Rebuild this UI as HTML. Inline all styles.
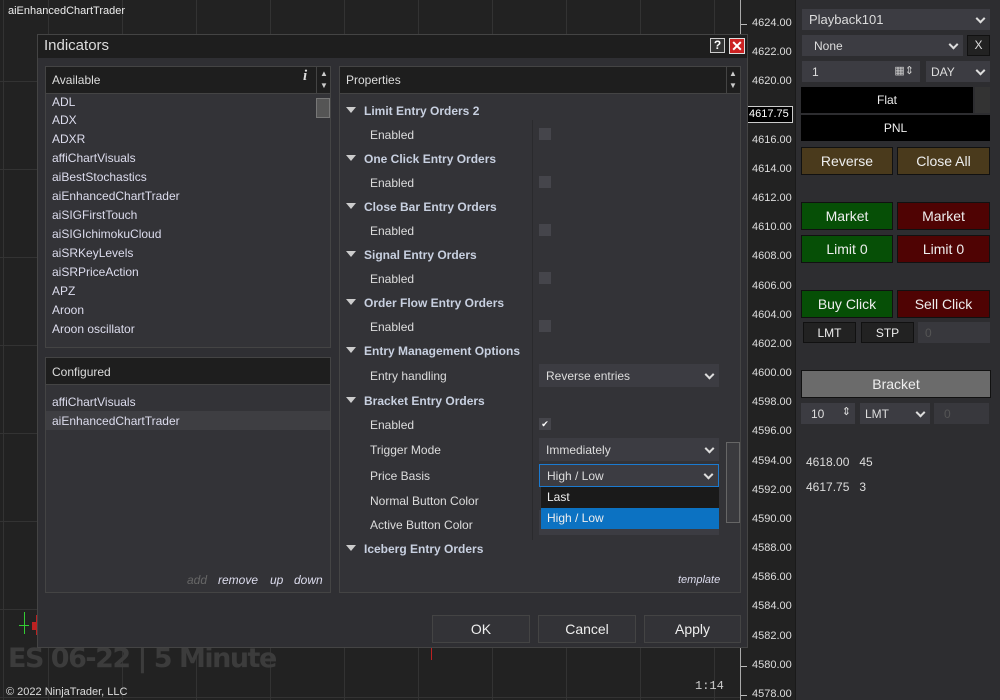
<!DOCTYPE html>
<html><head><meta charset="utf-8"><style>
*{margin:0;padding:0;box-sizing:border-box}
body{width:1000px;height:700px;background:#222;font-family:"Liberation Sans",sans-serif;font-size:12px;color:#ddd;position:relative;overflow:hidden}
.a{position:absolute}
.vl{position:absolute;top:0;width:1px;height:700px;background:#333}
.hl{position:absolute;left:0;width:740px;height:1px;background:#333}
.px{position:absolute;left:752px;font-size:11px;color:#ddd}
.tk{position:absolute;left:741px;width:6px;height:1px;background:#bbb}
.btn{position:absolute;display:flex;align-items:center;justify-content:center;font-size:14px;color:#eee;border:1px solid #111}
.dd{position:absolute;background:#3c3c42;color:#ddd;font-size:12px;padding-left:7px;display:flex;align-items:center}
.chev{position:absolute;right:6px;top:50%;width:7px;height:7px;border-right:2px solid #ddd;border-bottom:2px solid #ddd;transform:translateY(-70%) rotate(45deg)}
.cat{position:absolute;left:346px;font-weight:bold;color:#c8d0e0;font-size:12px}
.cat:before{content:"";display:inline-block;border-left:5px solid transparent;border-right:5px solid transparent;border-top:6px solid #ccc;margin-right:8px;vertical-align:2px}
.pn{position:absolute;left:370px;color:#ddd;font-size:12px}
.cb{position:absolute;left:539px;width:12px;height:12px;background:#45454b}
.li{position:absolute;left:52px;font-size:12px;color:#dde}
</style></head><body>
<!-- grid -->
<div class="vl" style="left:3px"></div><div class="vl" style="left:48px"></div><div class="vl" style="left:122px"></div><div class="vl" style="left:196px"></div><div class="vl" style="left:270px"></div><div class="vl" style="left:344px"></div><div class="vl" style="left:418px"></div><div class="vl" style="left:492px"></div><div class="vl" style="left:566px"></div><div class="vl" style="left:640px"></div><div class="vl" style="left:714px"></div>
<div class="hl" style="top:81px"></div><div class="hl" style="top:169px"></div><div class="hl" style="top:257px"></div><div class="hl" style="top:345px"></div><div class="hl" style="top:433px"></div><div class="hl" style="top:521px"></div><div class="hl" style="top:609px"></div><div class="hl" style="top:697px"></div>
<div class="a" style="left:8px;top:5px;font-size:11px;color:#eee">aiEnhancedChartTrader</div>
<!-- candles -->
<div class="a" style="left:24px;top:612px;width:1px;height:22px;background:#3c3"></div>
<div class="a" style="left:19px;top:625px;width:10px;height:1px;background:#3c3"></div>
<div class="a" style="left:32px;top:622px;width:5px;height:8px;background:#b22"></div>
<div class="a" style="left:36px;top:615px;width:1px;height:20px;background:#b22"></div>
<div class="a" style="left:431px;top:648px;width:1px;height:12px;background:#b22"></div>
<div class="a" style="left:8px;top:643px;font-size:27px;font-weight:bold;color:#3c3c3c;font-family:'DejaVu Sans',sans-serif;letter-spacing:-1.5px">ES 06-22 | 5 Minute</div>
<div class="a" style="left:6px;top:686px;font-size:11px;color:#ddd">© 2022 NinjaTrader, LLC</div>
<div class="a" style="left:695px;top:679px;font-size:12px;color:#ccc;font-family:'Liberation Mono',monospace">1:14</div>
<!-- price axis -->
<div class="a" style="left:740px;top:0;width:1px;height:700px;background:#aaa"></div>
<div class="a" style="left:795px;top:0;width:205px;height:700px;background:#2d2d30;border-left:1px solid #1a1a1a"></div>
<div id="axis"></div>
<div class="a" style="left:746px;top:106px;width:47px;height:17px;background:#000;border:1px solid #ccc;color:#fff;font-size:11px;padding-left:2px;line-height:15px">4617.75</div>
<!-- right panel -->
<div class="dd" style="left:802px;top:9px;width:188px;height:21px;font-size:13px">Playback101<span class="chev"></span></div>
<div class="dd" style="left:802px;top:35px;width:161px;height:21px;padding-left:12px">None<span class="chev"></span></div>
<div class="a" style="left:967px;top:35px;width:23px;height:21px;border:1px solid #111;background:#222;color:#ddd;font-size:12px;text-align:center;line-height:19px">X</div>
<div class="dd" style="left:802px;top:61px;width:118px;height:21px;padding-left:10px">1<span style="position:absolute;right:6px;top:3px;font-size:11px;color:#ccc">▦⇕</span></div>
<div class="dd" style="left:926px;top:61px;width:64px;height:21px;padding-left:5px">DAY<span class="chev"></span></div>
<div class="btn" style="left:801px;top:87px;width:172px;height:26px;background:#000;font-size:12px;border:none">Flat</div>
<div class="a" style="left:975px;top:87px;width:15px;height:26px;background:#333"></div>
<div class="btn" style="left:801px;top:115px;width:189px;height:26px;background:#000;font-size:12px;border:none">PNL</div>
<div class="btn" style="left:801px;top:147px;width:92px;height:28px;background:#4a3a1c">Reverse</div>
<div class="btn" style="left:897px;top:147px;width:93px;height:28px;background:#4a3a1c">Close All</div>
<div class="btn" style="left:801px;top:202px;width:92px;height:28px;background:#064f06">Market</div>
<div class="btn" style="left:897px;top:202px;width:93px;height:28px;background:#4f0303">Market</div>
<div class="btn" style="left:801px;top:235px;width:92px;height:28px;background:#064f06">Limit 0</div>
<div class="btn" style="left:897px;top:235px;width:93px;height:28px;background:#4f0303">Limit 0</div>
<div class="btn" style="left:801px;top:290px;width:92px;height:28px;background:#064f06">Buy Click</div>
<div class="btn" style="left:897px;top:290px;width:93px;height:28px;background:#4f0303">Sell Click</div>
<div class="btn" style="left:803px;top:322px;width:53px;height:21px;background:#222;font-size:12px">LMT</div>
<div class="btn" style="left:861px;top:322px;width:53px;height:21px;background:#222;font-size:12px">STP</div>
<div class="dd" style="left:918px;top:322px;width:72px;height:21px;color:#555;background:#38383d">0</div>
<div class="btn" style="left:801px;top:370px;width:190px;height:28px;background:#6b6b6b">Bracket</div>
<div class="dd" style="left:801px;top:403px;width:54px;height:21px;padding-left:10px">10<span style="position:absolute;right:4px;top:2px;font-size:11px">⇕</span></div>
<div class="dd" style="left:860px;top:403px;width:70px;height:21px;padding-left:5px">LMT<span class="chev"></span></div>
<div class="dd" style="left:934px;top:403px;width:55px;height:21px;color:#555;background:#38383d;padding-left:10px">0</div>
<div class="a" style="left:806px;top:455px;font-size:12px;color:#ddd">4618.00&nbsp;&nbsp;&nbsp;45</div>
<div class="a" style="left:806px;top:480px;font-size:12px;color:#ddd">4617.75&nbsp;&nbsp;&nbsp;3</div>
<!-- dialog -->
<div class="a" style="left:37px;top:34px;width:711px;height:614px;background:#2f2f33;border:1px solid #444"></div>
<div class="a" style="left:38px;top:35px;width:709px;height:23px;background:#1e1e1e"></div>
<div class="a" style="left:44px;top:37px;font-size:15px;color:#ddd">Indicators</div>
<div class="a" style="left:710px;top:38px;width:15px;height:15px;background:#333;border:1px solid #ccc;color:#fff;font-size:12px;font-weight:bold;text-align:center;line-height:13px">?</div>
<div class="a" style="left:729px;top:38px;width:16px;height:16px;background:#c22;border:1px solid #ddd;color:#fff;font-size:14px;font-weight:bold;text-align:center;line-height:14px">✕</div>
<!-- available -->
<div class="a" style="left:45px;top:66px;width:286px;height:282px;border:1px solid #444;background:#333337"></div>
<div class="a" style="left:46px;top:67px;width:284px;height:27px;background:#1e1e1e;border-bottom:1px solid #444"></div>
<div class="a" style="left:52px;top:73px;font-size:12px">Available</div>
<div class="a" style="left:303px;top:68px;font-size:15px;font-style:italic;font-family:'Liberation Serif',serif;font-weight:bold">i</div>
<div class="a" style="left:316px;top:67px;width:1px;height:27px;background:#444"></div>
<div class="a" style="left:320px;top:68px;font-size:8px;color:#ccc;line-height:12px">▲<br>▼</div>
<div class="a" style="left:316px;top:98px;width:14px;height:20px;border:1px solid #777;background:#555"></div>
<div class="li" style="top:95px">ADL</div><div class="li" style="top:113px">ADX</div><div class="li" style="top:132px">ADXR</div><div class="li" style="top:151px">affiChartVisuals</div><div class="li" style="top:170px">aiBestStochastics</div><div class="li" style="top:189px">aiEnhancedChartTrader</div><div class="li" style="top:208px">aiSIGFirstTouch</div><div class="li" style="top:227px">aiSIGIchimokuCloud</div><div class="li" style="top:246px">aiSRKeyLevels</div><div class="li" style="top:265px">aiSRPriceAction</div><div class="li" style="top:284px">APZ</div><div class="li" style="top:303px">Aroon</div><div class="li" style="top:322px">Aroon oscillator</div>
<div class="a" style="left:46px;top:94px;width:284px;height:1px;background:#333337"></div>
<!-- configured -->
<div class="a" style="left:45px;top:357px;width:286px;height:236px;border:1px solid #444;background:#333337"></div>
<div class="a" style="left:46px;top:358px;width:284px;height:27px;background:#1e1e1e;border-bottom:1px solid #444"></div>
<div class="a" style="left:52px;top:365px">Configured</div>
<div class="li" style="top:395px">affiChartVisuals</div>
<div class="a" style="left:46px;top:411px;width:284px;height:19px;background:#3e3e42"></div>
<div class="li" style="top:414px">aiEnhancedChartTrader</div>
<div class="a" style="left:187px;top:573px;font-style:italic;color:#666">add</div>
<div class="a" style="left:218px;top:573px;font-style:italic;color:#dde">remove</div>
<div class="a" style="left:270px;top:573px;font-style:italic;color:#dde">up</div>
<div class="a" style="left:294px;top:573px;font-style:italic;color:#dde">down</div>
<!-- properties -->
<div class="a" style="left:339px;top:66px;width:402px;height:527px;border:1px solid #444;background:#333337"></div>
<div class="a" style="left:340px;top:67px;width:400px;height:27px;background:#1e1e1e;border-bottom:1px solid #444"></div>
<div class="a" style="left:346px;top:73px">Properties</div>
<div class="a" style="left:726px;top:67px;width:1px;height:27px;background:#444"></div>
<div class="a" style="left:729px;top:68px;font-size:8px;color:#ccc;line-height:12px">▲<br>▼</div>
<div class="cat" style="top:104px">Limit Entry Orders 2</div>
<div class="pn" style="top:128px">Enabled</div><div class="cb" style="top:128px"></div>
<div class="cat" style="top:152px">One Click Entry Orders</div>
<div class="pn" style="top:176px">Enabled</div><div class="cb" style="top:176px"></div>
<div class="cat" style="top:200px">Close Bar Entry Orders</div>
<div class="pn" style="top:224px">Enabled</div><div class="cb" style="top:224px"></div>
<div class="cat" style="top:248px">Signal Entry Orders</div>
<div class="pn" style="top:272px">Enabled</div><div class="cb" style="top:272px"></div>
<div class="cat" style="top:296px">Order Flow Entry Orders</div>
<div class="pn" style="top:320px">Enabled</div><div class="cb" style="top:320px"></div>
<div class="cat" style="top:344px">Entry Management Options</div>
<div class="pn" style="top:369px">Entry handling</div>
<div class="dd" style="left:539px;top:364px;width:180px;height:23px">Reverse entries<span class="chev"></span></div>
<div class="cat" style="top:394px">Bracket Entry Orders</div>
<div class="pn" style="top:418px">Enabled</div><div class="cb" style="top:418px;color:#fff;font-size:9px;text-align:center;line-height:12px">✔</div>
<div class="pn" style="top:443px">Trigger Mode</div>
<div class="dd" style="left:539px;top:438px;width:180px;height:23px">Immediately<span class="chev"></span></div>
<div class="pn" style="top:469px">Price Basis</div>
<div class="dd" style="left:539px;top:464px;width:180px;height:23px;border:1px solid #1b7ad0">High / Low<span class="chev"></span></div>
<div class="pn" style="top:494px">Normal Button Color</div>
<div class="pn" style="top:518px">Active Button Color</div>
<div class="a" style="left:539px;top:510px;width:180px;height:25px;background:#3c3c42"></div>
<div class="a" style="left:541px;top:487px;width:178px;height:21px;background:#1a1a1a;padding-left:6px;line-height:21px;color:#eee">Last</div>
<div class="a" style="left:541px;top:508px;width:178px;height:21px;background:#0c72c2;padding-left:6px;line-height:21px;color:#eee">High / Low</div>
<div class="a" style="left:532px;top:120px;width:1px;height:420px;background:#2a2a2d"></div>
<div class="a" style="left:726px;top:442px;width:14px;height:81px;border:1px solid #666;background:#3a3a3e"></div>
<div class="cat" style="top:542px">Iceberg Entry Orders</div>
<div class="a" style="left:678px;top:574px;font-style:italic;font-size:11px;color:#dde">template</div>
<!-- buttons -->
<div class="btn" style="left:432px;top:615px;width:98px;height:28px;background:#333337;border-color:#444">OK</div>
<div class="btn" style="left:538px;top:615px;width:98px;height:28px;background:#333337;border-color:#444">Cancel</div>
<div class="btn" style="left:644px;top:615px;width:97px;height:28px;background:#333337;border-color:#444">Apply</div>
<script>
var h='';for(var i=0;i<24;i++){var y=24+i*29.17;var v=(4624-2*i).toFixed(2);if(i==3)continue;h+='<div class="px" style="top:'+(y-7)+'px">'+v+'</div><div class="tk" style="top:'+y+'px"></div>';}
document.getElementById('axis').innerHTML=h;
</script>
</body></html>
